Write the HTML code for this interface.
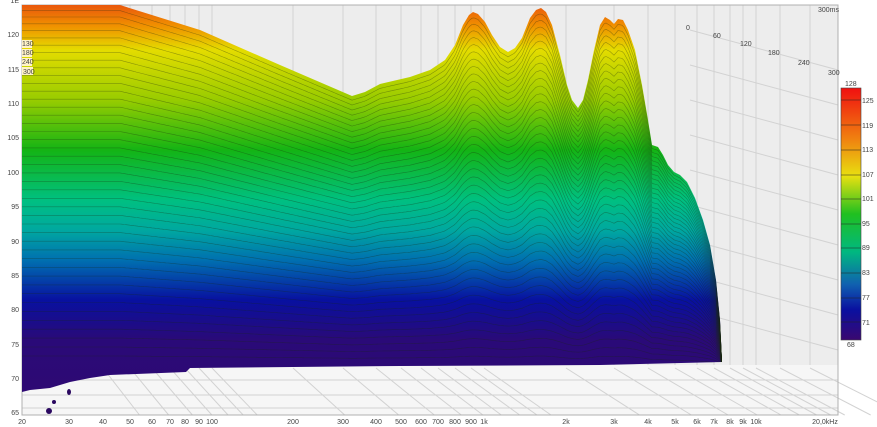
<!DOCTYPE html>
<html><head><meta charset="utf-8"><style>
html,body{margin:0;padding:0;background:#fff;width:877px;height:427px;overflow:hidden;font-family:"Liberation Sans",sans-serif}
svg text{font-family:"Liberation Sans",sans-serif;font-size:7px;fill:#444}
</style></head><body>
<svg id="s" width="877" height="427" viewBox="0 0 877 427" xmlns="http://www.w3.org/2000/svg">
<defs>
<linearGradient id="g" x1="0" y1="0" x2="0" y2="427" gradientUnits="userSpaceOnUse">
<stop offset="0" stop-color="#e84a10"/>
<stop offset="0.06" stop-color="#f09000"/>
<stop offset="0.117" stop-color="#e4dc00"/>
<stop offset="0.234" stop-color="#98cc00"/>
<stop offset="0.351" stop-color="#14b414"/>
<stop offset="0.468" stop-color="#00c080"/>
<stop offset="0.539" stop-color="#00a8a0"/>
<stop offset="0.609" stop-color="#0070b0"/>
<stop offset="0.703" stop-color="#0810a0"/>
<stop offset="0.796" stop-color="#2a0a78"/>
<stop offset="1" stop-color="#300870"/>
</linearGradient>
<linearGradient id="cb" x1="0" y1="0" x2="0" y2="1">
<stop offset="0" stop-color="#f01010"/>
<stop offset="0.2" stop-color="#f08010"/>
<stop offset="0.35" stop-color="#e8e010"/>
<stop offset="0.5" stop-color="#20c020"/>
<stop offset="0.65" stop-color="#00b880"/>
<stop offset="0.78" stop-color="#1060b0"/>
<stop offset="0.88" stop-color="#0a10a0"/>
<stop offset="1" stop-color="#3a0870"/>
</linearGradient>
<clipPath id="cp"><path id="shapeclip" d=""/></clipPath>
</defs>
<rect x="22" y="5" width="816" height="410" fill="#f6f6f6"/>
<rect x="22" y="5" width="816" height="360" fill="#ededed"/>
<g id="grid" stroke="#d2d2d2" stroke-width="1" fill="none"></g>
<rect x="22" y="5" width="816" height="410" fill="none" stroke="#b0b0b0"/>
<path id="shape" fill="url(#g)" d=""/>
<g id="lines" clip-path="url(#cp)" stroke="#1a2a10" stroke-opacity="0.38" stroke-width="0.6" fill="none"></g>
<g fill="#2a0860">
<ellipse cx="49" cy="411" rx="3" ry="3"/><ellipse cx="69" cy="392" rx="2" ry="3"/><ellipse cx="54" cy="402" rx="2" ry="2"/>
</g>
<g text-anchor="end">
<text x="19" y="3">1E</text><text x="19" y="37">120</text><text x="19" y="72">115</text><text x="19" y="106">110</text><text x="19" y="140">105</text><text x="19" y="175">100</text><text x="19" y="209">95</text><text x="19" y="244">90</text><text x="19" y="278">85</text><text x="19" y="312">80</text><text x="19" y="347">75</text><text x="19" y="381">70</text><text x="19" y="415">65</text>
</g>
<g fill="#fff3c8"><rect x="22" y="40" width="10" height="8"/><rect x="22" y="49" width="10" height="8"/><rect x="22" y="58" width="10" height="8"/><rect x="22" y="67" width="11" height="8"/></g>
<text x="22" y="46">130</text><text x="22" y="55">180</text><text x="22" y="64">240</text><text x="23" y="74">300</text>
<text x="686" y="30">0</text><text x="713" y="38">60</text><text x="740" y="46">120</text><text x="768" y="55">180</text><text x="798" y="65">240</text><text x="828" y="75">300</text>
<text x="818" y="12">300ms</text>
<g text-anchor="middle">
<text x="22" y="424">20</text><text x="69" y="424">30</text><text x="103" y="424">40</text><text x="130" y="424">50</text><text x="152" y="424">60</text><text x="170" y="424">70</text><text x="185" y="424">80</text><text x="199" y="424">90</text><text x="212" y="424">100</text><text x="293" y="424">200</text><text x="343" y="424">300</text><text x="376" y="424">400</text><text x="401" y="424">500</text><text x="421" y="424">600</text><text x="438" y="424">700</text><text x="455" y="424">800</text><text x="471" y="424">900</text><text x="484" y="424">1k</text><text x="566" y="424">2k</text><text x="614" y="424">3k</text><text x="648" y="424">4k</text><text x="675" y="424">5k</text><text x="697" y="424">6k</text><text x="714" y="424">7k</text><text x="730" y="424">8k</text><text x="743" y="424">9k</text><text x="756" y="424">10k</text><text x="825" y="424">20,0kHz</text>
</g>
<rect x="841" y="88" width="20" height="252" fill="url(#cb)" stroke="#444" stroke-width="0.6"/>
<g stroke="#222" stroke-width="0.6">
<line x1="841" y1="100" x2="861" y2="100"/><line x1="841" y1="125" x2="861" y2="125"/><line x1="841" y1="150" x2="861" y2="150"/><line x1="841" y1="175" x2="861" y2="175"/><line x1="841" y1="199" x2="861" y2="199"/><line x1="841" y1="224" x2="861" y2="224"/><line x1="841" y1="248" x2="861" y2="248"/><line x1="841" y1="273" x2="861" y2="273"/><line x1="841" y1="298" x2="861" y2="298"/><line x1="841" y1="322" x2="861" y2="322"/>
</g>
<text x="845" y="86">128</text><text x="847" y="347">68</text>
<text x="862" y="103">125</text><text x="862" y="128">119</text><text x="862" y="152">113</text><text x="862" y="177">107</text><text x="862" y="201">101</text><text x="862" y="226">95</text><text x="862" y="250">89</text><text x="862" y="275">83</text><text x="862" y="300">77</text><text x="862" y="325">71</text>
</svg>
<script>
(function(){
var tp=[[22,5],[120,5],[200,30],[280,65],[352,96],[365,92],[380,84],[410,77],[430,70],[445,60],[455,45],[463,25],[469,15],[473,12],[478,14],[485,22],[492,35],[500,47],[508,52],[515,48],[522,38],[530,18],[536,10],[541,8],[546,12],[552,25],[560,55],[567,85],[572,100],[578,108],[583,100],[588,80],[594,50],[600,25],[605,17],[610,20],[614,24],[618,19],[623,20],[628,30],[635,50],[642,85],[648,120],[652,145],[658,147],[663,155],[668,165],[674,172],[680,175],[687,182],[695,198],[703,220],[710,245],[716,280],[720,320],[722,362]];
var bt=[[722,362],[600,365],[400,366],[190,368],[186,372],[110,375],[90,378],[70,382],[50,388],[30,390],[22,392]];
var d="M"+tp.map(function(p){return p.join(",");}).join(" L")+" L"+bt.map(function(p){return p.join(",");}).join(" L")+" Z";
document.getElementById("shape").setAttribute("d",d);
document.getElementById("shapeclip").setAttribute("d",d);
function ty(x){for(var i=0;i<tp.length-1;i++){if(x>=tp[i][0]&&x<=tp[i+1][0]){var t=(x-tp[i][0])/(tp[i+1][0]-tp[i][0]);return tp[i][1]+t*(tp[i+1][1]-tp[i][1]);}}return 362;}
var NS="http://www.w3.org/2000/svg";
var g=document.getElementById("lines");
for(var k=1;k<44;k++){var t=k/44,p="";for(var x=22;x<=722;x+=2){var y0=ty(x);var y=y0+(365-y0)*Math.pow(t,1.1);p+=(x==22?"M":"L")+x+","+y.toFixed(1);}var e=document.createElementNS(NS,"path");e.setAttribute("d",p);g.appendChild(e);}
var gg=document.getElementById("grid");
function ln(a,b,c,dd){var e=document.createElementNS(NS,"line");e.setAttribute("x1",a);e.setAttribute("y1",b);e.setAttribute("x2",c);e.setAttribute("y2",dd);gg.appendChild(e);}
var xs=[103,130,152,170,185,199,212,293,343,376,401,421,438,455,471,484,566,614,648,675,697,714,730,743,756,780,810];
xs.forEach(function(x){ln(x,5,x,365);ln(x,368,x+(x-22)*0.08+30,415);});
[380,395,408].forEach(function(y){ln(22,y,838,y);});
[40,75,110,145,180,215,250,285,320].forEach(function(y){ln(690,y-10,838,y+30);});
})();
</script>
</body></html>
